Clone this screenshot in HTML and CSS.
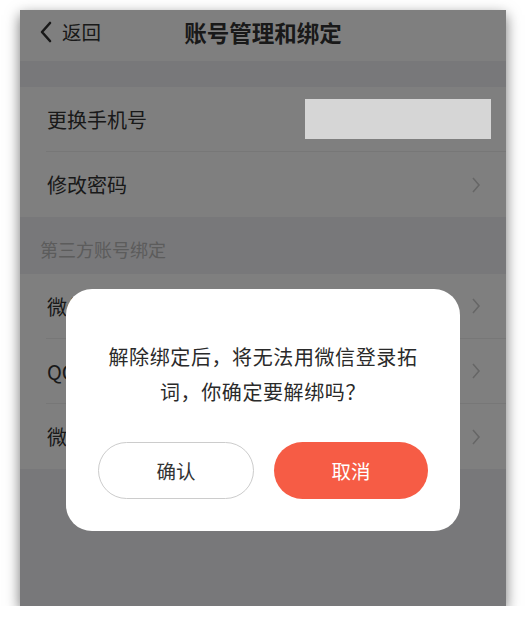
FILE: index.html
```html
<!DOCTYPE html>
<html lang="zh-CN">
<head>
    <meta charset="UTF-8">
    <title>账号管理和绑定</title>
    <link rel="stylesheet" href="styles.css">
</head>
<body>
    <div class="phone">
        <div class="nav">
            <div class="back">
                <svg width="14" height="22" viewBox="0 0 14 22"><polyline points="11,2 3,11 11,20" fill="none" stroke="#333" stroke-width="2.6" stroke-linecap="round" stroke-linejoin="round"/></svg>
                <span>返回</span>
            </div>
            <div class="title">账号管理和绑定</div>
        </div>

        <div class="gap"></div>

        <div class="group">
            <div class="row">
                <span>更换手机号</span>
                <div class="phone-mask"></div>
            </div>
            <div class="row">
                <span>修改密码</span>
                <svg class="arrow" width="10" height="18" viewBox="0 0 10 18"><polyline points="2,2 8,9 2,16" fill="none" stroke="#ccc" stroke-width="1.6"/></svg>
            </div>
        </div>

        <div class="section-title">第三方账号绑定</div>

        <div class="group">
            <div class="row">
                <span>微信</span>
                <svg class="arrow" width="10" height="18" viewBox="0 0 10 18"><polyline points="2,2 8,9 2,16" fill="none" stroke="#ccc" stroke-width="1.6"/></svg>
            </div>
            <div class="row">
                <span>QQ</span>
                <svg class="arrow" width="10" height="18" viewBox="0 0 10 18"><polyline points="2,2 8,9 2,16" fill="none" stroke="#ccc" stroke-width="1.6"/></svg>
            </div>
            <div class="row">
                <span>微博</span>
                <svg class="arrow" width="10" height="18" viewBox="0 0 10 18"><polyline points="2,2 8,9 2,16" fill="none" stroke="#ccc" stroke-width="1.6"/></svg>
            </div>
        </div>

        <!-- 解绑确认弹窗 -->
        <div class="mask"></div>
        <div class="dialog">
            <p class="dialog-text">解除绑定后，将无法用微信登录拓词，你确定要解绑吗？</p>
            <div class="dialog-btns">
                <button class="btn btn-ok">确认</button>
                <button class="btn btn-cancel">取消</button>
            </div>
        </div>
    </div>
</body>
</html>
```

FILE: styles.css
```css
body { margin: 0; background: #fff; font-family: "Noto Sans CJK SC", "Noto Sans", sans-serif; }
.phone { position: relative; overflow: hidden; width: 486px; height: 596px; margin: 10px 0 0 20px; background: #f0f0f4; box-shadow: 0 5px 13px rgba(0,0,0,0.55); color: #333; }

.nav { position: relative; height: 51px; box-sizing: border-box; padding-bottom: 8px; background: #fff; display: flex; align-items: center; justify-content: center; }
.back { position: absolute; left: 19px; top: 0; height: 43px; display: flex; align-items: center; gap: 9px; font-size: 19.5px; }
.title { font-size: 22.5px; font-weight: bold; }

.gap { height: 26px; }

.group { background: #fff; }
.row { height: 65px; margin-left: 26px; padding-right: 26px; display: flex; align-items: center; justify-content: space-between; font-size: 20px; border-bottom: 1px solid #eee; box-sizing: border-box; }
.row:last-child { border-bottom: none; }
.row span { margin-left: 1px; }
.arrow { margin-right: -1px; }
.phone-mask { position: relative; z-index: 2; width: 186px; height: 40px; background: #d6d6d6; margin-right: -11px; }

.section-title { height: 57px; box-sizing: border-box; padding: 8px 0 0 20px; line-height: 49px; font-size: 18px; color: #b8b8b8; }

.mask { position: absolute; left: 0; top: 0; right: 0; bottom: 0; background: rgba(0,0,0,0.5); z-index: 1; }
.dialog { position: absolute; left: 46px; right: 46px; top: 279px; z-index: 2; background: #fff; border-radius: 26px; padding: 50px 32px 32px; }
.dialog-text { margin: 0 8px; font-size: 20px; letter-spacing: 0.6px; line-height: 35px; text-align: center; color: #2a2a2a; }
.dialog-btns { display: flex; gap: 20px; margin-top: 33px; }
.btn { flex: 1; height: 57px; border-radius: 29px; font-family: inherit; font-size: 19.5px; cursor: pointer; }
.btn-ok { background: #fff; border: 1px solid #ccc; color: #333; }
.btn-cancel { background: #f65c45; border: none; color: #fff; }
```
